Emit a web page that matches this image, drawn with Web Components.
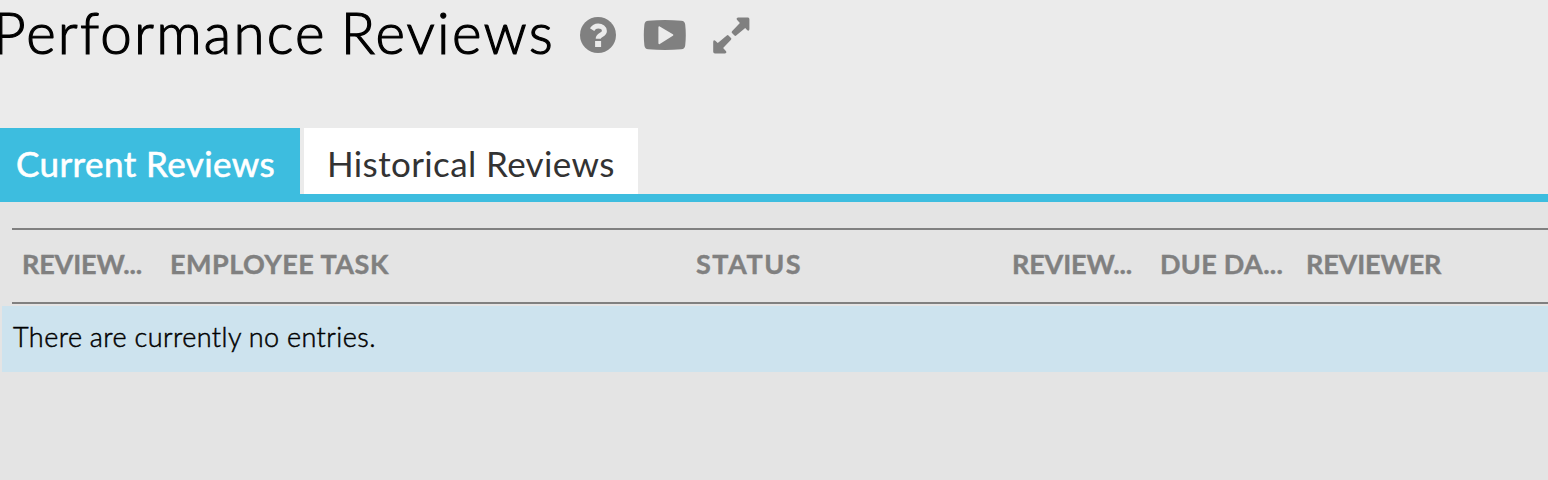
<!DOCTYPE html>
<html lang="en">
<head>
<meta charset="utf-8">
<title>Performance Reviews</title>
<style>
html,body{margin:0;height:100%}
body{background:#e4e4e4;font-family:Lato,"Open Sans",sans-serif;overflow:hidden}
</style>
</head>
<body>
<review-page></review-page>
<script>
class Base extends HTMLElement {
  constructor() {
    super();
    this.attachShadow({ mode: 'open' }).innerHTML = this.constructor.html;
  }
}

class PageHeading extends Base {
  static html = `<style>
    :host{display:flex;height:128px;box-sizing:border-box;color:#000;align-items:flex-start}
    h1{margin:0 0 0 -7px;width:587px;flex:none;font-size:56.5px;font-weight:300;line-height:65px;letter-spacing:2.2px;word-spacing:-3.5px;-webkit-text-stroke:1.2px #000;white-space:nowrap}
    .icons{display:flex;gap:27px;align-items:center;height:38px;margin-top:16px}
  </style>
  <h1><slot></slot></h1>
  <div class="icons"><slot name="icons"></slot></div>`;
}

const SHAPES = {
  help: [36, 36, `<circle cx="18" cy="18" r="18" fill="currentColor"/>
    <path d="M12.1 12.6C13.5 10.3 15.6 9 18.1 9C21.8 9 24.4 11.1 24.4 13.9C24.4 18 18.2 17.8 18.2 21.7" fill="none" stroke="#ebebeb" stroke-width="5"/>
    <rect x="15.1" y="24" width="6" height="6" fill="#ebebeb"/>`],
  video: [43, 30, `<path transform="translate(.8 0)" d="M4.5.7Q21-.7 37.5.7Q41 1 41.4 4.5Q42.6 15 41.4 25.5Q41 29 37.5 29.3Q21 30.7 4.5 29.3Q1 29 .6 25.5Q-.6 15 .6 4.5Q1 1 4.5.7Z" fill="currentColor"/>
    <path d="M16.3 7.2L29.4 15L16.3 23.2Z" fill="#ebebeb" stroke="#ebebeb" stroke-width="1.8" stroke-linejoin="round"/>`],
  expand: [37, 37, `<g fill="currentColor"><path d="M24.8.5H35Q36.4.5 36.4 2.3V12.3Q36 14.4 34.3 13.2L32.2 10.9L23.2 18.6Q22.3 19.3 21.5 18.5L19 16Q18.2 15.2 19 14.3L26.9 5.9L23.9 2.8Q22.8 1.2 24.8.5Z"/>
    <path transform="rotate(180 18.5 18.5)" d="M24.8.5H35Q36.8.5 36.8 2.3V12.3Q36.4 14.4 34.7 13.2L32.2 10.9L23.2 18.6Q22.3 19.3 21.5 18.5L19 16Q18.2 15.2 19 14.3L26.9 5.9L23.9 2.8Q22.8 1.2 24.8.5Z"/></g>`]
};
class ToolIcon extends HTMLElement {
  constructor() { super(); this.attachShadow({ mode: 'open' }); }
  connectedCallback() {
    const [w, h, body] = SHAPES[this.getAttribute('name')];
    this.shadowRoot.innerHTML = `<style>:host{display:block;color:#808080}svg{display:block}</style>
      <svg width="${w}" height="${h}" viewBox="0 0 ${w} ${h}">${body}</svg>`;
  }
}

class TabBar extends Base {
  static html = `<style>
    :host{display:flex;gap:4px;height:66px;border-bottom:8px solid #3dbddf}
  </style><slot></slot>`;
}

class TabItem extends Base {
  static html = `<style>
    :host{display:block;box-sizing:border-box;width:334px;height:66px;padding-left:23px;background:#fff;color:#333;font-size:35px;line-height:70px;letter-spacing:.38px;white-space:nowrap}
    :host([active]){width:300px;padding-left:16px;background:#3dbddf;color:#fff;-webkit-text-stroke:.6px #fff;letter-spacing:.42px}
  </style><slot></slot>`;
}

class ReviewTable extends Base {
  static html = `<style>
    :host{display:block;padding-top:26px}
    .head{display:grid;grid-template-columns:148px 526px 316px 148px 146px 1fr;margin-left:12px;height:72px;border-top:2px solid #808080;border-bottom:2px solid #808080}
    .body{margin:2px 0 0 2px;background:#cde3ee;height:66px}
  </style>
  <div class="head"><slot name="head"></slot></div>
  <div class="body"><slot></slot></div>`;
}

class ColumnTitle extends Base {
  static html = `<style>
    :host{display:block;padding-left:10px;color:#808080;font-size:27px;font-weight:700;line-height:68px;letter-spacing:var(--track,0);-webkit-text-stroke:.4px #808080;white-space:nowrap}
  </style><slot></slot>`;
}

class EmptyRow extends Base {
  static html = `<style>
    :host{display:block;padding-left:11px;font-size:27px;font-weight:300;line-height:61px;color:#000;letter-spacing:.45px;word-spacing:-.4px;-webkit-text-stroke:.5px #000;white-space:nowrap}
  </style><slot></slot>`;
}

class ReviewPage extends Base {
  static html = `<style>
    :host{display:flex;flex-direction:column;height:480px;overflow:hidden}
    .top{background:#ebebeb}
    .task{--track:.5px}
    .status{--track:1.5px}
    .due{--track:.3px}
    .review{--track:-.15px}
  </style>
  <div class="top">
    <page-heading>Performance Reviews
      <tool-icon slot="icons" name="help"></tool-icon>
      <tool-icon slot="icons" name="video"></tool-icon>
      <tool-icon slot="icons" name="expand"></tool-icon>
    </page-heading>
    <tab-bar><tab-item active>Current Reviews</tab-item><tab-item>Historical Reviews</tab-item></tab-bar>
  </div>
  <review-table>
    <column-title slot="head" class="review">REVIEW...</column-title>
    <column-title slot="head" class="task">EMPLOYEE TASK</column-title>
    <column-title slot="head" class="status">STATUS</column-title>
    <column-title slot="head" class="review">REVIEW...</column-title>
    <column-title slot="head" class="due">DUE DA...</column-title>
    <column-title slot="head" class="review">REVIEWER</column-title>
    <empty-row>There are currently no entries.</empty-row>
  </review-table>`;
}

customElements.define('tool-icon', ToolIcon);
customElements.define('page-heading', PageHeading);
customElements.define('tab-item', TabItem);
customElements.define('tab-bar', TabBar);
customElements.define('column-title', ColumnTitle);
customElements.define('empty-row', EmptyRow);
customElements.define('review-table', ReviewTable);
customElements.define('review-page', ReviewPage);
</script>
</body>
</html>
